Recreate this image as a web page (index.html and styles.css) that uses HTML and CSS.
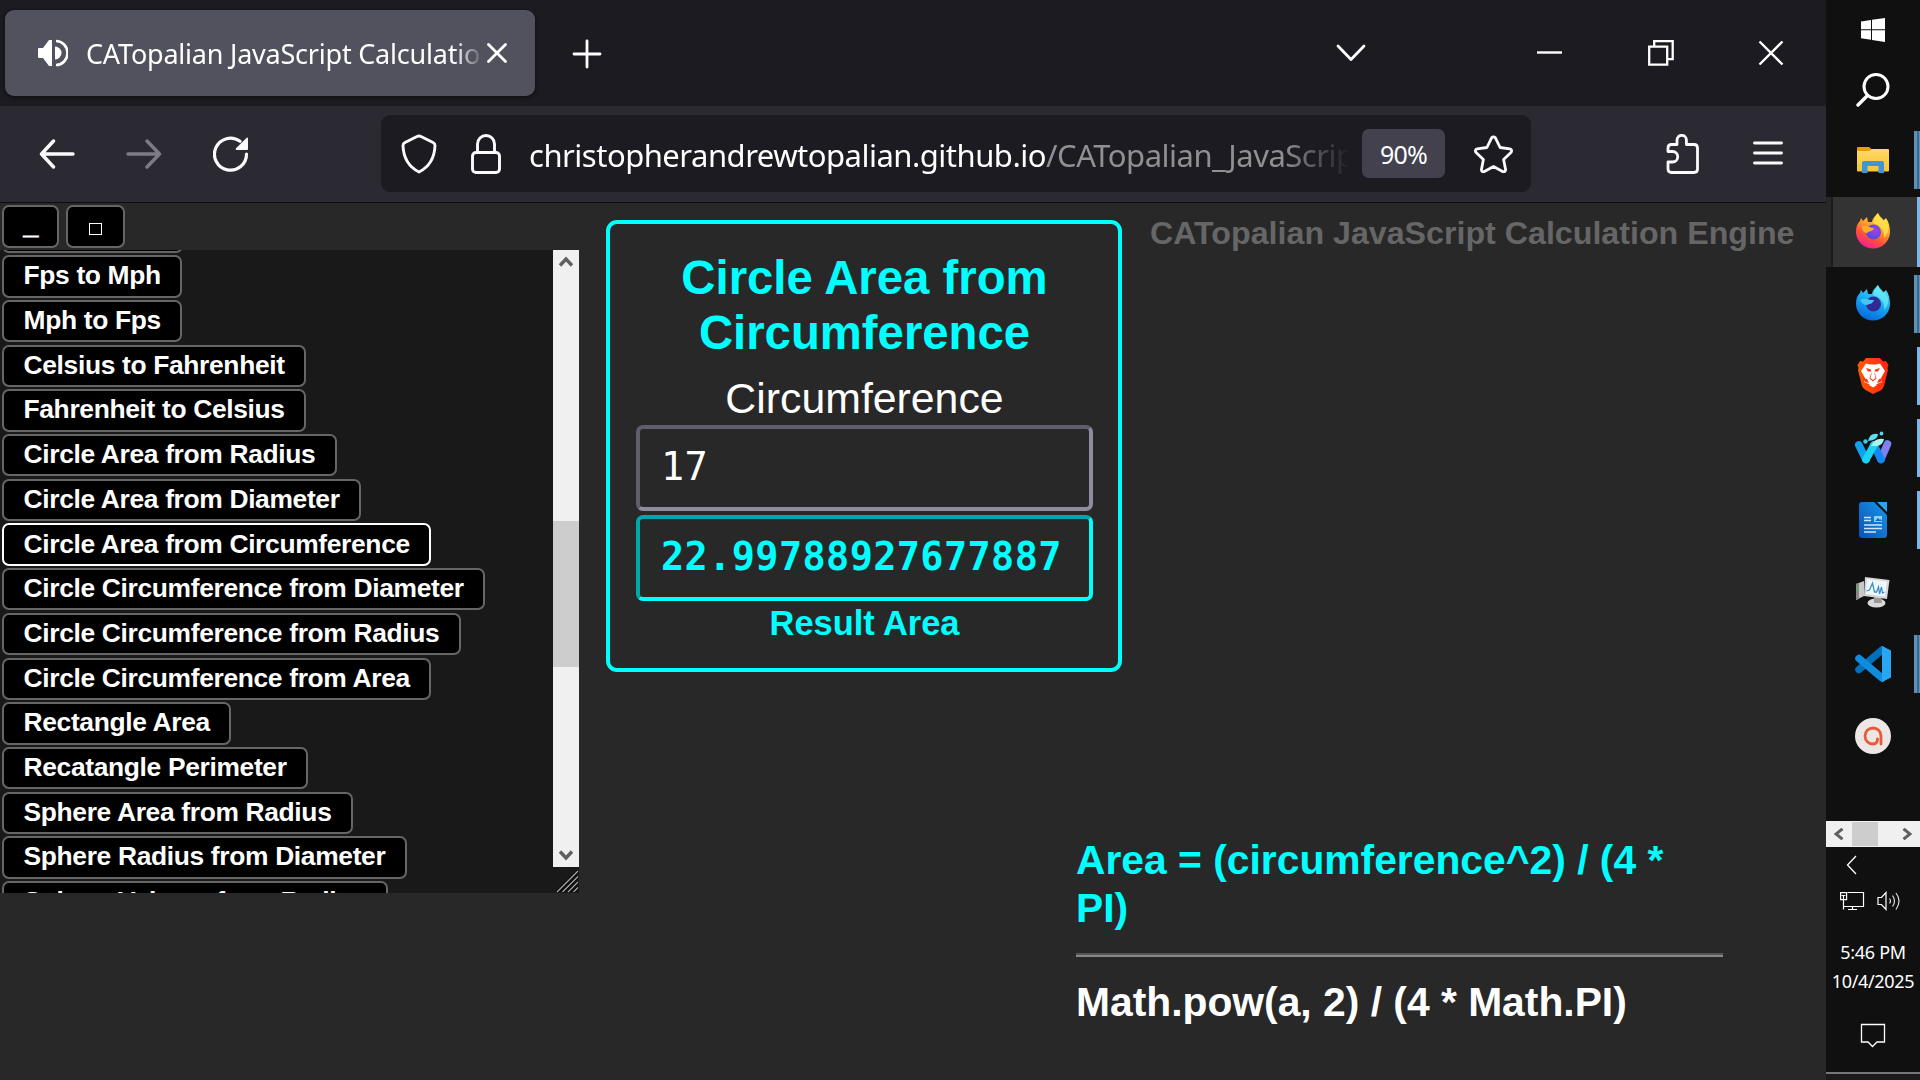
FILE: index.html
```html
<!DOCTYPE html>
<html lang="en">
<head>
<meta charset="utf-8">
<title>CATopalian JavaScript Calculation Engine</title>
<link rel="stylesheet" href="styles.css">
</head>
<body>
<div class="browser">
  <header class="tabbar">
    <div class="tab">
      <svg class="tab-sound" width="30" height="28" viewBox="0 0 30 28"><path d="M1 9h4l6-8h3v26h-3l-6-8H1a1 1 0 0 1-1-1v-8a1 1 0 0 1 1-1z" fill="#fff"/><path d="M17 7.500a6.500 6.500 0 0 1 0 13z" fill="#fff"/><path d="M18 2a11.500 12 0 0 1 0 24" fill="none" stroke="#fff" stroke-width="2.600"/></svg>
      <span class="tab-title">CATopalian JavaScript Calculation</span>
      <svg class="tab-close" width="20" height="20" viewBox="0 0 20 20"><path d="M1.500 1.500l17 17M18.500 1.500l-17 17" stroke="#fff" stroke-width="2.800" stroke-linecap="round"/></svg>
    </div>
    <svg class="new-tab" width="30" height="30" viewBox="0 0 30 30"><path d="M15 2v26M2 15h26" stroke="#fff" stroke-width="2.800" stroke-linecap="round"/></svg>
    <div class="window-controls">
      <svg width="30" height="18" viewBox="0 0 30 18"><path d="M2 2l13 13.500L28 2" fill="none" stroke="#fff" stroke-width="2.800" stroke-linecap="round" stroke-linejoin="round"/></svg>
      <svg class="minimize" width="25" height="26" viewBox="0 0 25 26"><path d="M0 12.500h25" stroke="#fff" stroke-width="2.400"/></svg>
      <svg class="restore" width="26" height="26" viewBox="0 0 26 26"><path d="M1.200 6.700h18v18h-18zM6.200 6V1.200h18.500v18H20" fill="none" stroke="#fff" stroke-width="2.300"/></svg>
      <svg class="close" width="26" height="26" viewBox="0 0 26 26"><path d="M1.500 1.500l23 23M24.500 1.500l-23 23" stroke="#fff" stroke-width="2.400"/></svg>
    </div>
  </header>

  <nav class="toolbar">
    <svg class="back" width="36" height="30" viewBox="0 0 36 30"><path d="M34 15H3M14.500 2L2.500 15l12 13" fill="none" stroke="#fbfbfe" stroke-width="3.400" stroke-linecap="round" stroke-linejoin="round"/></svg>
    <svg class="forward" width="36" height="30" viewBox="0 0 36 30"><path d="M2 15h31M21 2l12.500 13L21 28" fill="none" stroke="#7d7c84" stroke-width="3.400" stroke-linecap="round" stroke-linejoin="round"/></svg>
    <svg class="reload" width="36" height="36" viewBox="0 0 36 36"><path d="M33.500 18A16 16 0 1 1 27 5.300" fill="none" stroke="#fbfbfe" stroke-width="3.200" stroke-linecap="round"/><path d="M34 1.500q1 0 1 1V13q0 1-1 1H23.500q-1.500-.5-.5-1.800z" fill="#fbfbfe"/></svg>
    <div class="urlbar">
      <svg class="shield" width="36" height="40" viewBox="0 0 36 40"><path d="M18 2q1 0 2 .6L32 8.500q2 1 2 3C33.500 25 28 33 18 38 8 33 2.500 25 2 11.500q0-2 2-3L16 2.600Q17 2 18 2z" fill="none" stroke="#fbfbfe" stroke-width="2.900"/></svg>
      <svg class="lock" width="30" height="40" viewBox="0 0 30 40"><rect x="1.500" y="18.500" width="27" height="20" rx="3.500" fill="none" stroke="#fbfbfe" stroke-width="2.900"/><path d="M6.500 18V10a8.500 8.500 0 0 1 17 0v8" fill="none" stroke="#fbfbfe" stroke-width="2.900"/></svg>
      <span class="url"><span class="host">christopherandrewtopalian.github.io</span><span class="path">/CATopalian_JavaScript</span></span>
      <span class="zoom-level">90%</span>
      <svg class="star" width="39" height="38" viewBox="0 0 39 38"><path d="M17.600 2.800q1.900-2 3.800 0l4.700 9.700 9.700 1.400q2.600.8 1.400 3.300l-7.600 7.200 2 10.300q-.4 2.600-3 1.900L19.500 31.600l-9.100 5q-2.600.7-3-1.900l2-10.300-7.600-7.200q-1.200-2.500 1.400-3.300l9.700-1.400z" fill="none" stroke="#fbfbfe" stroke-width="2.800" stroke-linejoin="round"/></svg>
    </div>
    <svg class="puzzle" width="34" height="40" viewBox="0 0 34 40"><path d="M2 16.500V14q0-3.500 3.500-3.500H11V6a4.700 4.700 0 0 1 9.400 0v4.500H28q3.500 0 3.500 3.500v21q0 3.500-3.500 3.500H5.500Q2 38.500 2 35v-7h4.500a5 5 0 0 0 0-10.500H2z" fill="none" stroke="#fbfbfe" stroke-width="2.800" stroke-linejoin="round"/></svg>
    <svg class="menu" width="30" height="26" viewBox="0 0 30 26"><path d="M1.500 3h27M1.500 13h27M1.500 23h27" stroke="#fbfbfe" stroke-width="2.900" stroke-linecap="round"/></svg>
  </nav>

  <main class="page">
    <section class="side">
      <div class="panel-controls"><button class="btn control bar">_</button><button class="btn control wide"><i class="square"></i></button></div>
      <div class="panel">
        <div class="list">
          <button class="btn blank"></button>
          <button class="btn">Fps to Mph</button>
          <button class="btn">Mph to Fps</button>
          <button class="btn">Celsius to Fahrenheit</button>
          <button class="btn">Fahrenheit to Celsius</button>
          <button class="btn">Circle Area from Radius</button>
          <button class="btn">Circle Area from Diameter</button>
          <button class="btn active">Circle Area from Circumference</button>
          <button class="btn">Circle Circumference from Diameter</button>
          <button class="btn">Circle Circumference from Radius</button>
          <button class="btn">Circle Circumference from Area</button>
          <button class="btn">Rectangle Area</button>
          <button class="btn">Recatangle Perimeter</button>
          <button class="btn">Sphere Area from Radius</button>
          <button class="btn">Sphere Radius from Diameter</button>
          <button class="btn">Sphere Volume from Radius</button>
        </div>
        <div class="scroll-col">
          <div class="scrollbar">
            <svg width="14" height="12" viewBox="0 0 14 12"><path d="M1 9.500L7 3l6 6.500" fill="none" stroke="#606060" stroke-width="3.400"/></svg>
            <div class="thumb"></div>
            <svg width="14" height="12" viewBox="0 0 14 12"><path d="M1 2.500L7 9l6-6.500" fill="none" stroke="#606060" stroke-width="3.400"/></svg>
          </div>
          <svg width="26" height="26" viewBox="0 0 26 26"><path d="M4 25L25 4M9.500 25L25 9.500M15 25l10-10M20.500 25l4.500-4.500" stroke="#000" stroke-width="3"/><path d="M4 25L25 4M9.500 25L25 9.500M15 25l10-10M20.500 25l4.500-4.500" stroke="#aaa" stroke-width="1.300"/></svg>
        </div>
      </div>
    </section>

    <section class="calculator">
      <h1>Circle Area from Circumference</h1>
      <div class="label">Circumference</div>
      <div class="field">17</div>
      <div class="field result">22.99788927677887</div>
      <div class="caption">Result Area</div>
    </section>

    <section class="info">
      <div class="app-title">CATopalian JavaScript Calculation Engine</div>
      <div class="formula">
        <div class="math">Area = (circumference^2) / (4 * PI)</div>
        <hr>
        <div class="code">Math.pow(a, 2) / (4 * Math.PI)</div>
      </div>
    </section>
  </main>
</div>

<aside class="taskbar">
  <div class="task start"><svg width="24" height="24" viewBox="0 0 24 24"><path d="M0 3.400l10-1.400v9.300H0zM11 1.800L24 0v11.300H11zM0 12.300h10v9.400L0 20.300zM11 12.300h13V24l-13-1.900z" fill="#fff"/></svg></div>
  <div class="task search"><svg width="34" height="34" viewBox="0 0 34 34"><circle cx="20" cy="13.500" r="12" fill="none" stroke="#fff" stroke-width="3"/><path d="M11.500 22.500L2 32" stroke="#fff" stroke-width="3.400" stroke-linecap="round"/></svg></div>
  <div class="task stacked"><svg width="34" height="28" viewBox="0 0 34 28"><defs><linearGradient id="fold" x2="0" y2="1"><stop stop-color="#ffd96c"/><stop offset="1" stop-color="#fbc42d"/></linearGradient></defs><path d="M1 2q0-1 1-1h11l3 2.500L14 7H1z" fill="#e3a008"/><path d="M1 5h12l3-2h16q1 0 1 1v20.500q0 1-1 1H2q-1 0-1-1z" fill="url(#fold)"/><path d="M6 27V17q0-2 2-2h18q2 0 2 2v10h-5.500v-7h-11v7z" fill="#3c96dd"/></svg></div>
  <div class="task open current"><svg width="36" height="36" viewBox="0 0 36 36"><defs><linearGradient id="fx" x1=".8" y1="0" x2=".3" y2="1"><stop stop-color="#fff44f"/><stop offset=".4" stop-color="#ffa52b"/><stop offset=".7" stop-color="#ff5138"/><stop offset="1" stop-color="#f5199b"/></linearGradient><radialGradient id="fxg" cx=".6" cy=".4"><stop stop-color="#a53ff0"/><stop offset="1" stop-color="#5b4bd8"/></radialGradient></defs><path d="M23 0c1 4 4 5 5 8l3-3c3 4 4 10 4 14a17 16.500 0 0 1-34 0c0-5 1-8 4-11l1-3 2 3 4-4 1 5 4 0C17 6 20 3 23 0z" fill="url(#fx)"/><circle cx="18.500" cy="19" r="7.500" fill="url(#fxg)"/><path d="M7 13c4-2 7 2 12 2-1 4-6 3-7 5-3 0-5-3-5-7z" fill="#ffab28"/><path d="M23 0c2 5 8 7 10 13 1 5-1 9-4 12 1-8-4-13-11-15 1-4 3-7 5-10z" fill="#ffe34a" opacity=".8"/></svg></div>
  <div class="task stacked"><svg class="lifted" width="36" height="36" viewBox="0 0 36 36"><defs><linearGradient id="fd" x1=".7" y1="0" x2=".3" y2="1"><stop stop-color="#5ce7f4"/><stop offset=".5" stop-color="#14a8f5"/><stop offset="1" stop-color="#0865d8"/></linearGradient></defs><path d="M23 0c1 4 4 5 5 8l3-3c3 4 4 10 4 14a17 16.500 0 0 1-34 0c0-5 1-8 4-11l1-3 2 3 4-4 1 5 4 0C17 6 20 3 23 0z" fill="url(#fd)"/><circle cx="18.500" cy="19" r="7.500" fill="#312a93"/><path d="M5 15c5-3 8 0 14 0-1 4-5 4-7 5-3 0-5-2-7-5z" fill="#45c8f5"/><path d="M23 0c2 5 8 7 10 13 1 5-1 9-4 12 1-8-4-13-11-15 1-4 3-7 5-10z" fill="#6ceef5" opacity=".7"/></svg></div>
  <div class="task open"><svg width="32" height="38" viewBox="0 0 32 38"><defs><linearGradient id="br"><stop stop-color="#ff5a00"/><stop offset="1" stop-color="#ff2414"/></linearGradient></defs><path d="M9 1h14l3 3.500 3-.5 2.500 4-1 3 .5 2-4 16q-1 3-3.500 4.500L16 37l-7.500-4Q6 31.500 5 29L1 13l.5-2-1-3L3 4l3 .5z" fill="url(#br)"/><path d="M9 6.500l4 1h6l4-1 5 7.500-4 7 1 4-5 2-4 3-4-3-5-2 1-4-4-7z" fill="#fff"/><path d="M9 11l5 1.500.5 4.500-1 4 2.500 2 2.500-2-1-4 .5-4.500 5-1.500-2 3.500-3.500 0 1 4 1 3-3.500 3-3.500-3 1-3 1-4-3.500 0zM6 21l4 1 2 4-4-1zM26 21l-4 1-2 4 4-1z" fill="#f63b15"/><path d="M12 28l4-2.500 4 2.500-4 2.500z" fill="#fff"/></svg></div>
  <div class="task open"><svg width="38" height="34" viewBox="0 0 38 34"><g fill="none" stroke-linecap="round" stroke-width="7.600"><path d="M27 28l6.500-15" stroke="#7b83ee"/><path d="M4.800 14L12 28.500" stroke="#12a0ee"/><path d="M20 14l7 14.500" stroke="#1487f0"/><path d="M12 28.500L20 14" stroke="#1cd2f2"/></g><path d="M17 15q4-9 13-7-1 6-7 7z" fill="#a9f5f1"/><path d="M14 10Q16 1 24 3q0 6-10 7z" fill="#5adfee"/><circle cx="27.500" cy="2.500" r="1.900" fill="#4bd8ea"/><circle cx="11.500" cy="10.500" r="2.200" fill="#38cde6"/></svg></div>
  <div class="task open"><svg width="30" height="38" viewBox="0 0 30 38"><defs><linearGradient id="wr" x1="1" x2="0" y2="1"><stop stop-color="#1897e8"/><stop offset="1" stop-color="#0a50b8"/></linearGradient></defs><path d="M4 1h12l13 13v20q0 3-3 3H4q-3 0-3-3V4q0-3 3-3z" fill="url(#wr)"/><path d="M19 1h10v10z" fill="#2ba4ef"/><path d="M6 16.500h7M6 19.500h7M6 24h18M6 27.500h18M6 31h12" stroke="#c9e8fb" stroke-width="1.300"/><rect x="16" y="15" width="8" height="6" fill="#8fd0f8"/><path d="M17 20l3-3 2 2 1-1 1 2z" fill="#0b66c4"/></svg></div>
  <div class="task"><svg width="36" height="32" viewBox="0 0 36 32"><path d="M1 8l8-3v15l-8 4z" fill="#c9c9c9"/><path d="M1 8l3-1v16l-3 1z" fill="#888"/><path d="M2 11h1.500v3H2z" fill="#3dcf3d"/><ellipse cx="21.500" cy="27" rx="9" ry="4.500" fill="#d9d9d9"/><path d="M19 21h7l1 6h-8z" fill="#999"/><path d="M10 1l24.500 3L32 23 9 20z" fill="#d6d6d6"/><path d="M12 3l20 2.500-2 15L11 18z" fill="#eef7fc"/><path d="M11.500 15l3-1 3-7 2 9 2 0 2-5 1 7 2-7 1 6 2-1" fill="none" stroke="#3e91c8" stroke-width="1.300"/></svg></div>
  <div class="task stacked"><svg width="36" height="36" viewBox="0 0 36 36"><path d="M4 23.500L27 4" stroke="#0070bd" stroke-width="7.500" stroke-linecap="round"/><path d="M4 12.500L27 32" stroke="#0f8cdb" stroke-width="7.500" stroke-linecap="round"/><path d="M27 0l9 4.500v27L27 36z" fill="#27a7f2"/></svg></div>
  <div class="task"><svg width="36" height="36" viewBox="0 0 36 36"><circle cx="18" cy="18" r="18" fill="#ece7e5"/><path d="M26 26V18a8 8 0 1 0-8 8q4.500 0 4.500-5" fill="none" stroke="#ea5a38" stroke-width="2.800" stroke-linecap="round"/></svg></div>
  <div class="mini-scroll">
    <svg width="10" height="12" viewBox="0 0 10 12"><path d="M8.500 .8L2 6l6.500 5.200" fill="none" stroke="#606060" stroke-width="3"/></svg>
    <div class="mini-thumb"></div>
    <svg width="10" height="12" viewBox="0 0 10 12"><path d="M1.500 .8L8 6l-6.500 5.200" fill="none" stroke="#606060" stroke-width="3"/></svg>
  </div>
  <svg class="chevron" width="12" height="20" viewBox="0 0 12 20"><path d="M10 1L1.500 10l8.500 9" fill="none" stroke="#fff" stroke-width="1.300"/></svg>
  <div class="tray">
    <svg width="25" height="20" viewBox="0 0 25 20"><path d="M7.500 1.500h16v14h-20V9M3.500 15v3.500M8 18.500h9M12.500 16v2" fill="none" stroke="#fff" stroke-width="1.200"/><path d="M.6 1.600h6v7h-6zM1.500 4.500h4M3.500 4v4" fill="none" stroke="#fff" stroke-width="1.200"/></svg>
    <svg width="24" height="20" viewBox="0 0 24 20"><path d="M1 6.500h3.500L9 1.500v17l-4.500-5H1z" fill="none" stroke="#fff" stroke-width="1.200"/><path d="M12.500 7.500q2 2.500 0 5M15.500 4.500q4 5.500 0 11M19 2q6 8 0 16.500" fill="none" stroke="#ddd" stroke-width="1.200"/></svg>
  </div>
  <div class="clock"><div class="time">5:46 PM</div><div class="date">10/4/2025</div></div>
  <svg class="notice" width="26" height="26" viewBox="0 0 26 26"><path d="M1.500 1.500h23v17.500H17l-4.500 4.500L8 19H1.500z" fill="none" stroke="#fff" stroke-width="1.300"/></svg>
  <div class="desktop-peek"></div>
</aside>
</body>
</html>
```
FILE: styles.css
```css
* { box-sizing: border-box; }
body {
  margin: 0;
  width: 1920px;
  height: 1080px;
  display: flex;
  overflow: hidden;
  background: #282828;
  color: #fff;
  font-family: "Liberation Sans", Arial, sans-serif;
}
svg { display: block; flex: none; }

/* Browser window */
.browser { width: 1826px; height: 1080px; display: flex; flex-direction: column; }
.tabbar { height: 106px; background: #1c1b22; display: flex; align-items: flex-start; padding: 10px 0 0 5px; flex: none; font-family: "Noto Sans", sans-serif; }
.tab { width: 530px; height: 86px; background: #52525e; border-radius: 9px; display: flex; align-items: center; padding-left: 33px; box-shadow: 0 1px 4px rgba(0,0,0,.6); }
.tab-sound { margin-top: -1px; }
.tab-title {
  width: 395px; margin-left: 18px; overflow: hidden; white-space: nowrap;
  font-size: 27px; line-height: 40px; letter-spacing: -.22px; padding-top: 2px;
  -webkit-mask-image: linear-gradient(to right, #000 368px, transparent 398px);
  mask-image: linear-gradient(to right, #000 368px, transparent 398px);
}
.tab-close { margin: -1px 0 0 6px; }
.new-tab { margin: 29px 0 0 37px; }
.window-controls { display: flex; align-items: center; height: 26px; margin: 30px 0 0 734px; }
.minimize { margin-left: 171px; }
.restore { margin-left: 86px; }
.close { margin-left: 84px; }

.toolbar { height: 97px; background: #2b2a33; border-bottom: 1px solid #0c0c0d; display: flex; align-items: center; padding-bottom: 1px; flex: none; font-family: "Noto Sans", sans-serif; }
.back { margin-left: 39px; }
.forward { margin-left: 51px; }
.reload { margin-left: 51px; }
.urlbar { width: 1150px; height: 77px; margin-left: 132px; background: #1c1b22; border-radius: 9px; display: flex; align-items: center; padding-left: 20px; }
.lock { margin-left: 34px; }
.url {
  width: 819px; margin-left: 28px; overflow: hidden; white-space: nowrap;
  font-size: 31px; line-height: 46px; letter-spacing: -.5px; padding-top: 2px;
  -webkit-mask-image: linear-gradient(to right, #000 755px, transparent 822px);
  mask-image: linear-gradient(to right, #000 755px, transparent 822px);
}
.path { color: #8f8f94; }
.zoom-level { width: 83px; height: 49px; margin-left: 14px; background: #42414d; border-radius: 7px; text-align: center; font-size: 25px; line-height: 50px; letter-spacing: -.8px; }
.star { margin-left: 29px; }
.puzzle { margin-left: 135px; }
.menu { margin: -2px 0 0 53px; }

/* Page */
.page { flex: 1; background: #282828; display: flex; align-items: flex-start; min-height: 0; }
.side { width: 579px; flex: none; padding-top: 2px; }
.panel-controls { display: flex; gap: 7px; padding-left: 2px; height: 45px; }
.btn {
  height: 42.300px; flex: none; margin: 0; padding: 0 19.500px 2px;
  background: #000; border: 2px solid #666; border-radius: 7px;
  color: #fff; font: bold 26.400px/34px "Liberation Sans", Arial, sans-serif; letter-spacing: -.34px;
  white-space: nowrap; text-align: left;
}
.control { width: 57px; height: 43px; }
.bar { -webkit-text-stroke: 1px #fff; padding-bottom: 4px; }
.wide { width: 59px; display: flex; align-items: center; justify-content: center; padding: 5px 0 0; }
.square { width: 13px; height: 12px; border: 1px solid #fff; }
.panel { height: 643px; background: #191919; display: flex; justify-content: space-between; overflow: hidden; }
.list { display: flex; flex-direction: column; align-items: flex-start; gap: 2.420px; padding-left: 2px; margin-top: -39.500px; }
.blank { width: 181px; }
.active { border-color: #fff; }
.scroll-col { width: 26px; }
.scrollbar { height: 617px; background: #f0f0f0; display: flex; flex-direction: column; align-items: center; padding: 6px 0; }
.thumb { width: 26px; height: 146px; background: #cdcdcd; margin: 253px 0 182px; }

.calculator {
  width: 516px; height: 452px; margin: 17px 0 0 27px; flex: none;
  border: 4px solid #0ff; border-radius: 11px; padding: 27px 25px 0 26px; text-align: center;
}
h1 { margin: 0; color: #0ff; font-size: 47.300px; line-height: 54.700px; }
.label { margin-top: 12px; font-size: 42.800px; line-height: 52px; height: 52.600px; }
.field {
  height: 86px; margin-bottom: 4px; border: 4px solid; border-color: #5f5e6b #8f8d9d #8f8d9d #5f5e6b; border-radius: 7px;
  padding-left: 21px; text-align: left; font: 38.500px/75px "DejaVu Sans Mono", monospace; letter-spacing: .4px;
}
.result { border-color: #00a9a9 #0ff #0ff #00a9a9; color: #0ff; font-weight: bold; }
.caption { color: #0ff; font-size: 34.400px; line-height: 41px; font-weight: bold; margin-top: -2px; }

.info { width: 704px; height: 877px; position: relative; }
.app-title { margin: 12px 0 0 28px; color: #666; font-weight: bold; font-size: 32.200px; line-height: 37px; white-space: nowrap; }
.formula { position: absolute; left: -46px; top: 633px; width: 647px; font-weight: bold; font-size: 40.800px; line-height: 48px; }
.math { color: #0ff; }
hr { margin: 21px 0; height: 4px; border: 0; border-top: 2px solid #555; background: #888; }
.code { color: #fff; }

/* Taskbar */
.taskbar { width: 94px; height: 1080px; background: #101010; display: flex; flex-direction: column; }
.task { width: 94px; height: 72px; flex: none; display: flex; align-items: center; justify-content: center; }
.start { height: 59px; }
.search { height: 65px; padding-bottom: 4px; }
.open { background: linear-gradient(#76b9ed, #76b9ed) right center / 3px 58px no-repeat; }
.stacked { background: linear-gradient(to right, #5f92bb 3px, #41678a 3px, #41678a 5px, #5f92bb 5px) right center / 6px 58px no-repeat; }
.current { padding-bottom: 2px; background: linear-gradient(#76b9ed, #76b9ed) right center / 3px 70px no-repeat, linear-gradient(to right, #272727 5px, #1b1b1b 5px, #1b1b1b 7px, #333 7px) center / 94px 70px no-repeat; }
.lifted { margin-bottom: 2px; }
.mini-scroll { height: 26px; margin-top: 49px; background: #f0f0f0; display: flex; align-items: center; padding-left: 8px; flex: none; }
.mini-thumb { width: 26px; height: 24px; margin: 0 24px 0 8px; background: #cdcdcd; }
.chevron { margin: 8px 0 0 20px; }
.tray { display: flex; gap: 12px; margin: 16px 0 0 14px; }
.clock { font: 18px/29px "Noto Sans", sans-serif; text-align: center; margin-top: 27px; height: 58px; white-space: nowrap; }
.time { letter-spacing: -.3px; }
.date { letter-spacing: -.35px; }
.notice { margin: 27px 0 0 34px; }
.desktop-peek { margin-top: auto; height: 8px; flex: none; border-top: 2px solid #777; background: #1b1b1b; }
```
